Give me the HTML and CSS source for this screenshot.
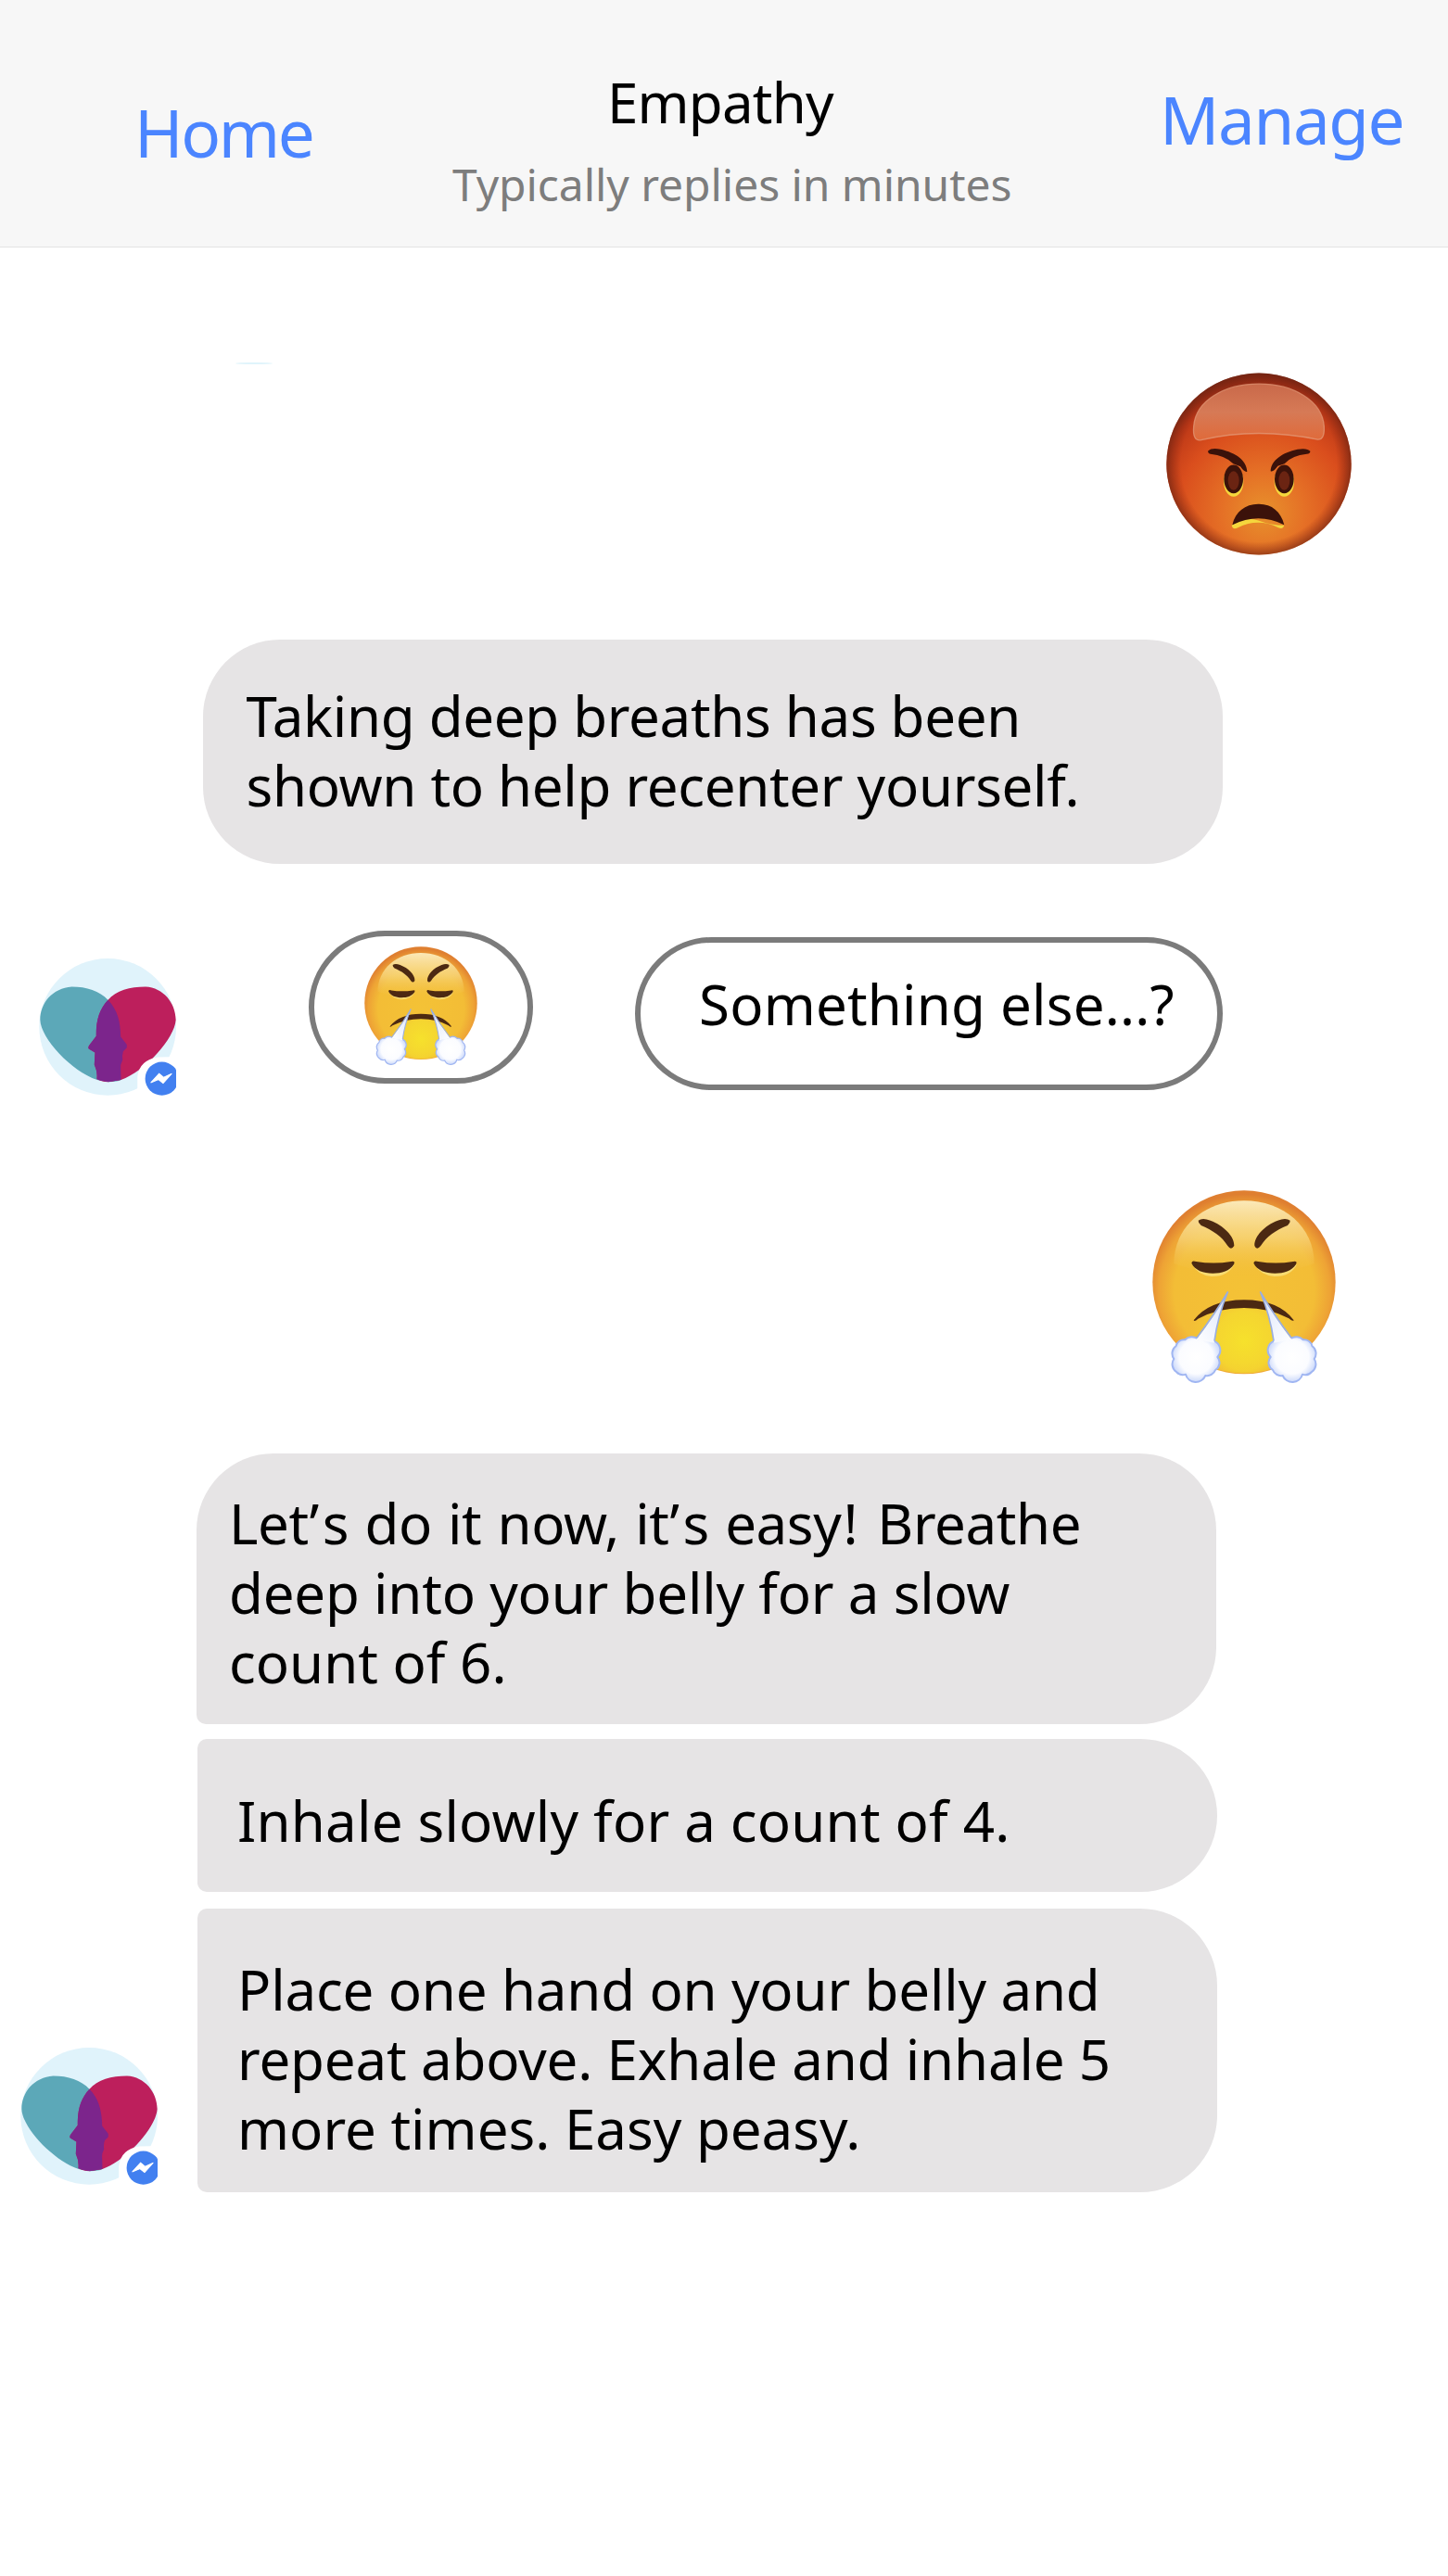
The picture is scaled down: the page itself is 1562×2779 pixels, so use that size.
FILE: index.html
```html
<!DOCTYPE html>
<html lang="en">
<head>
<meta charset="utf-8">
<title>Empathy</title>
<link rel="stylesheet" href="styles.css">
</head>
<body>
<svg class="defs" width="0" height="0" aria-hidden="true">
  <defs>
    <radialGradient id="red" gradientUnits="userSpaceOnUse" cx="400" cy="520" r="450">
      <stop offset="0" stop-color="#e8922c"/><stop offset=".3" stop-color="#e57026"/><stop offset=".62" stop-color="#da4e1d"/><stop offset=".85" stop-color="#bb3717"/><stop offset="1" stop-color="#7c2413"/>
    </radialGradient>
    <radialGradient id="redrim" gradientUnits="userSpaceOnUse" cx="385" cy="361" r="300">
      <stop offset=".84" stop-color="#8a2510" stop-opacity="0"/><stop offset="1" stop-color="#6b2412" stop-opacity=".7"/>
    </radialGradient>
    <linearGradient id="redshine" x1="0" y1="0" x2="0" y2="1">
      <stop offset="0" stop-color="#c9694a"/><stop offset=".5" stop-color="#d67a56"/><stop offset="1" stop-color="#e06a3a"/>
    </linearGradient>
    <radialGradient id="yel" gradientUnits="userSpaceOnUse" cx="368" cy="400" r="315">
      <stop offset="0" stop-color="#f4c236"/><stop offset=".72" stop-color="#f3bd36"/><stop offset=".88" stop-color="#eea335"/><stop offset="1" stop-color="#df7f30"/>
    </radialGradient>
    <radialGradient id="chin" gradientUnits="userSpaceOnUse" cx="368" cy="560" r="190">
      <stop offset="0" stop-color="#f6e12c"/><stop offset=".5" stop-color="#f5d92f" stop-opacity=".85"/><stop offset="1" stop-color="#f3c334" stop-opacity="0"/>
    </radialGradient>
    <linearGradient id="yelshine" x1="0" y1="0" x2="0" y2="1">
      <stop offset="0" stop-color="#fbe9b8"/><stop offset=".5" stop-color="#f7d478" stop-opacity=".8"/><stop offset="1" stop-color="#f3bd3c" stop-opacity="0"/>
    </linearGradient>
    <radialGradient id="puff" gradientUnits="userSpaceOnUse" cx="212" cy="612" r="84">
      <stop offset="0" stop-color="#ffffff"/><stop offset=".65" stop-color="#fbfcff"/><stop offset="1" stop-color="#c6d5fa"/>
    </radialGradient>
    <linearGradient id="jet" x1="0" y1="1" x2="1" y2="0">
      <stop offset="0" stop-color="#fff"/><stop offset="1" stop-color="#dbe5fb"/>
    </linearGradient>
    <g id="cloud">
      <path d="M216 552A32 32 0 0 0 176 556A26 26 0 0 0 147 576A30 30 0 0 0 140 618A30 30 0 0 0 148 660A28 28 0 0 0 178 668A34 34 0 0 0 242 672A28 28 0 0 0 274 654A28 28 0 0 0 281 612A32 32 0 0 0 270 560Z" fill="url(#puff)" stroke="#a0b6f2" stroke-width="6" stroke-linejoin="round"/>
      <path d="M212 556Q270 480 314 402Q282 480 270 566Z" fill="url(#jet)"/>
      <path d="M214 550Q270 476 314 402Q282 480 271 560" fill="none" stroke="#9aaee0" stroke-width="5" stroke-linejoin="round"/>
    </g>
    <symbol id="triumph" viewBox="70 72 594 624">
      <ellipse cx="367" cy="370" rx="296" ry="297" fill="url(#yel)"/>
      <ellipse cx="367" cy="550" rx="185" ry="114" fill="url(#chin)"/>
      <path d="M140 310C140 190 240 106 367 106S594 190 594 310Q480 350 367 350T140 310Z" fill="url(#yelshine)"/>
      <g fill="#f8dc72">
        <path d="M200 312Q265 340 335 312Q315 352 262 351Q215 346 200 312Z"/>
        <path d="M401 312Q470 340 538 312Q518 352 465 351Q418 346 401 312Z"/>
      </g>
      <g fill="#4c2912">
        <path d="M219 170Q232 160 258 170C300 186 336 220 335 252Q325 268 314 252C296 222 266 202 228 186Q218 178 219 170Z"/>
        <path d="M516 170Q502 160 476 170C434 186 400 220 401 252Q408 268 421 252C440 222 468 202 508 186Q517 178 516 170Z"/>
        <path d="M197 308Q198 298 212 303Q268 312 325 303Q340 300 334 312C320 334 295 341 266 341C235 341 208 331 197 308Z"/>
        <path d="M398 308Q399 298 413 303Q469 312 526 303Q541 300 535 312C521 334 496 341 467 341C436 341 409 331 398 308Z"/>
        <path d="M204 493Q255 427 367 427T528 493Q525 498 512 487Q450 453 367 453T218 488Q207 499 204 493Z"/>
      </g>
      <use href="#cloud"/>
      <use href="#cloud" transform="matrix(-1 0 0 1 734 0)"/>
    </symbol>
    <symbol id="angry" viewBox="85 66 600 590">
      <ellipse cx="385" cy="361" rx="299" ry="294" fill="url(#red)"/>
      <ellipse cx="385" cy="361" rx="299" ry="294" fill="url(#redrim)"/>
      <path d="M174 240C180 155 275 102 385 102S590 155 596 240Q598 284 575 282Q480 262 385 262T195 284Q170 286 174 240Z" fill="url(#redshine)" stroke="#e39a78" stroke-opacity=".75" stroke-width="4"/>
      <g fill="#f5d73d">
        <ellipse cx="303" cy="418" rx="32" ry="49"/><ellipse cx="467" cy="418" rx="32" ry="49"/>
        <path d="M297 560Q340 528 383 544T467 560Q463 574 448 567Q383 535 317 567Q300 576 297 560Z"/>
      </g>
      <g fill="#3b120a">
        <ellipse cx="303" cy="410" rx="31" ry="46"/><ellipse cx="467" cy="410" rx="31" ry="46"/>
        <path d="M221 318Q232 308 262 314C310 326 345 348 347 386Q338 388 325 369L302 360Q275 334 228 329Q218 325 221 318Z"/>
        <path d="M551 320Q542 309 510 314C462 324 424 350 423 384Q432 388 446 368L468 360Q492 334 540 329Q552 328 551 320Z"/>
        <path d="M299 558C310 515 340 492 383 491S456 515 467 558Q425 537 383 537T299 558Z"/>
      </g>
      <g fill="#6b2412"><ellipse cx="303" cy="415" rx="18" ry="31"/><ellipse cx="467" cy="415" rx="18" ry="31"/></g>
    </symbol>
    <clipPath id="teal"><path d="M289 206C262 176 220 163 172 163C110 168 70 215 70 270C72 330 170 440 254 465L290 471Q320 470 331 464L330 430Q328 415 336 400Q334 385 338 372L350 360V350L330 325C329 280 322 240 289 206Z"/></clipPath>
    <symbol id="avatar" viewBox="66 72 443 443">
      <circle cx="288" cy="293" r="221" fill="#e0f3fb"/>
      <path d="M289 206C262 176 220 163 172 163C110 168 70 215 70 270C72 330 170 435 254 464L290 471Q320 470 331 464V400L350 357L328 325C327 280 320 240 289 206Z" fill="#5ca8b8"/>
      <path d="M289 206C315 175 360 163 410 163C468 166 507 215 508 270C504 330 410 435 331 464L290 471Q266 470 253 461Q256 440 245 415L247 376L227 364Q223 358 231 349L251 323C250 270 262 235 289 206Z" fill="#bd1f5c"/>
      <path clip-path="url(#teal)" d="M289 206C315 175 360 163 410 163C468 166 507 215 508 270C504 330 410 435 331 464L290 471Q266 470 253 461Q256 440 245 415L247 376L227 364Q223 358 231 349L251 323C250 270 262 235 289 206Z" fill="#7c258c"/>
      <path d="M384 515V455Q390 400 450 391L490 390Q505 380 509 370V515Z" fill="#fff"/>
      <circle cx="463" cy="460" r="54" fill="#4280f0"/>
      <path d="M427 473L454 444L469 456L495 444L467 475L452 463Z" fill="#fff" stroke="#fff" stroke-width="3"/>
    </symbol>
  </defs>
</svg>
<header class="topbar">
  <a class="nav home">Home</a>
  <div class="heading">
    <h1 class="title">Empathy</h1>
    <p class="status">Typically replies in minutes</p>
  </div>
  <a class="nav manage">Manage</a>
</header>
<main class="chat">
  <div class="residue"></div>
  <svg class="sent angry"><use href="#angry"/></svg>
  <p class="bubble first">Taking deep breaths has been<br>shown to help recenter yourself.</p>
  <div class="replies">
    <svg class="avatar"><use href="#avatar"/></svg>
    <button class="reply reply-emoji"><svg class="mini"><use href="#triumph"/></svg></button>
    <button class="reply reply-text">Something else...?</button>
  </div>
  <svg class="sent triumph"><use href="#triumph"/></svg>
  <section class="group">
    <svg class="avatar"><use href="#avatar"/></svg>
    <div class="stack">
      <p class="bubble lead"><span class="airy">Let<span class="apos">’</span>s do it now, it<span class="apos">’</span>s easy<span class="bang">!</span> Breathe</span><br>deep into your belly for a slow<br><span class="plain">count of 6.</span></p>
      <p class="bubble middle">Inhale slowly for a count of 4.</p>
      <p class="bubble last">Place one hand on your belly and<br>repeat above. Exhale and inhale 5<br><span class="plain">more times. Easy peasy.</span></p>
    </div>
  </section>
</main>
</body>
</html>
```
FILE: styles.css
```css
* { box-sizing: border-box; }
body {
  margin: 0;
  background: #fff;
  color: #000;
  font-family: "Noto Sans", sans-serif;
  font-size: 60px;
  line-height: 75px;
}
h1, p { margin: 0; font-weight: 400; font-size: inherit; }
svg { display: block; }
.defs { position: absolute; }
.topbar {
  display: flex;
  align-items: flex-start;
  height: 267px;
  background: #f7f7f7;
  border-bottom: 1px solid #e3e3e3;
  white-space: nowrap;
}
.nav { flex: none; font-size: 71px; line-height: 90px; color: #4b85ff; }
.home { width: 197px; margin: 98px 0 0 145px; letter-spacing: -2.4px; }
.heading { flex: none; width: 620px; margin: 73px 0 0 146px; }
.title { padding-left: 167px; letter-spacing: -.8px; }
.status { font-size: 48px; line-height: 60px; margin-top: 21px; color: #7d7d7d; letter-spacing: -.06px; }
.manage { margin: 84px 0 0 143px; letter-spacing: -1.4px; }
.chat { display: flex; flex-direction: column; }
.residue { width: 40px; height: 2px; margin: 124px 0 1px 254px; border-radius: 50%; background: #dff4fb; }
.sent { align-self: flex-end; }
.angry { width: 200px; height: 197px; margin: 8px 104px 0 0; }
.bubble {
  width: 1100px;
  background: #e6e4e5;
  white-space: nowrap;
}
.first { height: 242px; margin: 91px 0 0 218.5px; padding: 45px 47px; border-radius: 83px; letter-spacing: -.31px; }
.replies { display: flex; align-items: flex-start; height: 172px; margin: 72px 0 0 42px; }
.avatar { width: 148px; height: 148px; flex: none; }
.replies .avatar { margin-top: 30px; }
.reply {
  height: 165px;
  padding: 0;
  background: #fff;
  border: 6px solid #7b7b7b;
  border-radius: 83px;
  font: inherit;
  color: inherit;
}
.reply-emoji { width: 242px; margin-left: 143px; }
.mini { width: 122px; height: 128px; margin: -3px 0 0 54px; }
.reply-text { width: 634px; margin: 7px 0 0 110px; padding: 0 0 21px 63px; text-align: left; white-space: nowrap; letter-spacing: .2px; }
.triumph { width: 198px; height: 208px; margin: 108px 121px 0 0; }
.group { display: flex; align-items: flex-end; margin: 76px 0 0 22px; }
.group .avatar { margin-bottom: 8px; }
.stack { display: flex; flex-direction: column; margin-left: 43px; }
.lead { height: 292px; margin-left: -1px; padding: 38px 35px; border-radius: 83px 83px 83px 10px; letter-spacing: -.2px; }
.airy { letter-spacing: -.4px; word-spacing: 2px; }
.apos { margin: 0 4px 0 1px; }
.bang { margin: 0 4px 0 2px; }
.middle { height: 165px; margin-top: 16px; padding: 51px 43px; border-radius: 10px 83px 83px 10px; letter-spacing: .2px; }
.last { height: 306px; margin-top: 18px; padding: 50px 43px; border-radius: 10px 83px 83px 10px; letter-spacing: -.16px; }
.plain { letter-spacing: 0; }
```
